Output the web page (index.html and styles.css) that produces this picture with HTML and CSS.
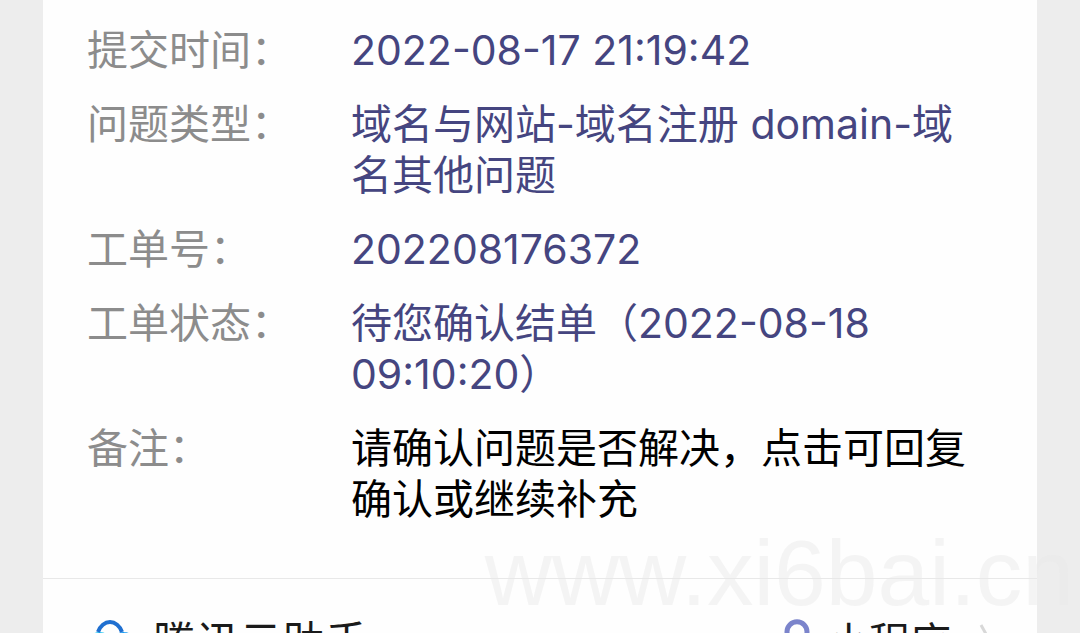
FILE: index.html
```
<!DOCTYPE html>
<html lang="zh-CN">

<head>
    <meta charset="UTF-8">
    <meta name="viewport" content="width=device-width, initial-scale=1.0">
    <title>工单通知</title>
    <link rel="stylesheet" href="styles.css">
</head>

<body>
    <main class="card">
        <dl class="details">
            <dt>提交时间：</dt>
            <dd>2022-08-17 21:19:42</dd>
            <dt>问题类型：</dt>
            <dd>域名与网站-域名注册 domain-域名其他问题</dd>
            <dt>工单号：</dt>
            <dd>202208176372</dd>
            <dt>工单状态：</dt>
            <dd>待您确认结单（2022-08-18 09:10:20）</dd>
            <dt>备注：</dt>
            <dd class="remark">请确认问题是否解决，点击可回复确认或继续补充</dd>
        </dl>
        <a class="card-footer" href="#">
            <svg class="cloud-icon" viewBox="0 0 48 48" fill="none" stroke-width="4">
                <path d="M12 38h24a11 11 0 0 0 1-23c-8-1-13 11-25 23" stroke="#1b9cf0"></path>
                <path d="M12 38a12 12 0 0 1-4-22c4-2 9-1 12 2" stroke="#25c6f2"></path>
                <path d="M11 13c2-6 7-10 12-10s10 4 12 10" stroke="#1f6fd0"></path>
            </svg>
            <span class="app-name">腾讯云助手</span>
            <svg class="mini-icon" viewBox="0 0 26 48" fill="none" stroke="#7b84cb" stroke-width="5">
                <path d="M6 20a10 10 0 1 1 14 0l-14 8a10 10 0 1 0 14 0"></path>
            </svg>
            <span>小程序</span>
            <svg class="arrow-icon" viewBox="0 0 14 40" fill="none" stroke="#d8d8d8" stroke-width="3">
                <path d="M2 2l10 18L2 38"></path>
            </svg>
        </a>
    </main>
    <div class="watermark">www.xi6bai.cn</div>
</body>

</html>
```

FILE: styles.css
```
* {
    box-sizing: border-box;
}

body {
    margin: 0;
    height: 100vh;
    position: relative;
    overflow: hidden;
    background: #ededed;
    font-family: Inter, "Noto Sans CJK SC", sans-serif;
    font-size: 41px;
    line-height: 51px;
}

.card {
    margin: 0 43px;
    background: #fefefe;
}

.details {
    display: grid;
    grid-template-columns: 220px 1fr;
    column-gap: 44px;
    row-gap: 23px;
    margin: 0;
    padding: 25px 66px 53px 44px;
}

.details dt {
    color: #8c8c8c;
}

.details dd {
    margin: 0;
    color: #454580;
}

.details .remark {
    color: #000;
}

.card-footer {
    display: flex;
    align-items: center;
    height: 128px;
    padding: 0 44px;
    border-top: 1px solid #e8e8e8;
    color: #1a1a1a;
    text-decoration: none;
}

.cloud-icon {
    width: 48px;
    height: 48px;
    margin-right: 18px;
}

.app-name {
    flex: 1;
    font-size: 43px;
}

.mini-icon {
    width: 26px;
    height: 48px;
    margin-right: 18px;
}

.arrow-icon {
    width: 14px;
    height: 40px;
    margin-left: 28px;
}

.watermark {
    position: absolute;
    right: 6px;
    top: 521px;
    font-family: "Liberation Sans", Arial, sans-serif;
    font-size: 93px;
    line-height: 104px;
    color: rgba(232, 232, 232, 0.45);
    pointer-events: none;
}
```
